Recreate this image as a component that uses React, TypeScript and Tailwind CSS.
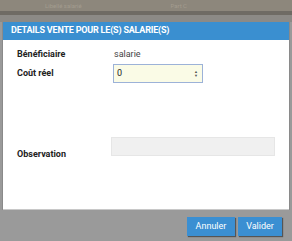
import { FC } from "react";

const App: FC = () => {
  return (
    <div
      className="w-[292px] h-[241px] bg-[#9a9a9a] overflow-hidden flex flex-col"
      style={{ fontFamily: "Roboto, 'Liberation Sans', sans-serif" }}
    >
      {/* dimmed page behind the modal */}
      <div className="h-[22px] flex flex-col bg-[#8a8986]">
        <div className="h-[11px] bg-[#8d877c] flex px-[45px] justify-between text-[6px] text-[#a39c8f] leading-[11px]">
          <span>Libellé salarié</span>
          <span className="mr-[60px]">Part C</span>
        </div>
        <div className="h-[4px] bg-[#6f6b64]" />
        <div className="flex-1 bg-[#8c8a86]" />
      </div>

      {/* modal */}
      <div className="mx-[2px] border-x border-[#8a8a8a] flex flex-col">
        <div className="h-[18px] bg-[#3a8fd0] flex items-center px-[8px]">
          <span className="text-white font-bold text-[9px] tracking-[-0.2px]">
            DETAILS VENTE POUR LE(S) SALARIE(S)
          </span>
        </div>
        <div className="h-[169px] bg-white flex flex-col text-[9px] text-[#222]">
          <div className="flex items-center mt-[10px] h-[10px] px-[14px]">
            <span className="w-[97px] font-bold">Bénéficiaire</span>
            <span className="text-[#444]">salarie</span>
          </div>
          <div className="flex items-center mt-[4px] px-[14px]">
            <span className="w-[96px] font-bold">Coût réel</span>
            <div className="w-[90px] h-[19px] border border-[#9cb2d8] bg-[#fafbe6] flex items-center justify-between pl-[3px] pr-[4px]">
              <span className="text-[#222]">0</span>
              <span className="flex flex-col text-[#555] text-[4px] leading-[4px]">
                <span>▲</span>
                <span>▼</span>
              </span>
            </div>
          </div>
          <div className="flex items-start mt-[54px] px-[14px]">
            <span className="w-[96px] font-bold mt-[11px]">Observation</span>
            <div className="w-[168px] h-[19px] bg-[#f0f0f0] border border-[#e6e6e6]" />
          </div>
        </div>
        <div className="h-[1px] bg-[#c8c8c8]" />
      </div>

      {/* footer buttons */}
      <div className="flex justify-end gap-[3px] pr-[10px] mt-[7px]">
        <button className="w-[48px] h-[19px] bg-[#3b8fd2] text-white text-[9px] shadow-[1px_1px_1px_#555]">
          Annuler
        </button>
        <button className="w-[44px] h-[19px] bg-[#3b8fd2] text-white text-[9px] shadow-[1px_1px_1px_#555]">
          Valider
        </button>
      </div>
    </div>
  );
};

export default App;
